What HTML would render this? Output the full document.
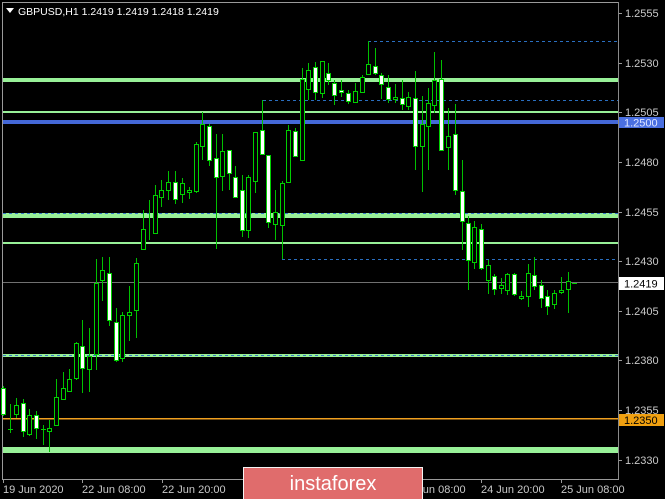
<!DOCTYPE html>
<html><head><meta charset="utf-8"><style>
html,body{margin:0;padding:0;background:#000;}
body{width:665px;height:499px;overflow:hidden;position:relative;font-family:"Liberation Sans",sans-serif;}
svg{position:absolute;left:0;top:0;}
</style></head><body>
<svg width="665" height="499" xmlns="http://www.w3.org/2000/svg" font-family="Liberation Sans, sans-serif">
<rect width="665" height="499" fill="#000"/>
<line x1="2.5" y1="2" x2="2.5" y2="480" stroke="#9a9a9a" stroke-width="1"/>
<line x1="2" y1="2.5" x2="619" y2="2.5" stroke="#9a9a9a" stroke-width="1"/>
<line x1="618.5" y1="2" x2="618.5" y2="480" stroke="#8a8a8a" stroke-width="1"/>
<line x1="2" y1="479.5" x2="619" y2="479.5" stroke="#9a9a9a" stroke-width="1"/>
<g stroke-dasharray="3,3" stroke="#2a6fc0" stroke-width="1">
<line x1="368" y1="41.5" x2="618" y2="41.5"/>
<line x1="263" y1="100.5" x2="618" y2="100.5"/>
<line x1="282" y1="259.5" x2="618" y2="259.5"/>
</g>
<rect x="3" y="78" width="615" height="4" fill="#98f098"/>
<rect x="3" y="111" width="615" height="2" fill="#98f098"/>
<rect x="3" y="120" width="615" height="4" fill="#4468d8"/>
<rect x="3" y="213" width="615" height="5" fill="#98f098"/>
<line x1="3" y1="213.5" x2="618" y2="213.5" stroke="#3a7ac8" stroke-dasharray="3,3"/>
<rect x="3" y="242" width="615" height="2" fill="#98f098"/>
<rect x="3" y="282" width="615" height="1" fill="#707070"/>
<rect x="3" y="354" width="615" height="3" fill="#98f098"/>
<line x1="3" y1="355.5" x2="618" y2="355.5" stroke="#3a7ac8" stroke-dasharray="3,3"/>
<rect x="3" y="418" width="615" height="1.5" fill="#f0a020"/>
<rect x="3" y="447" width="615" height="6" fill="#98f098"/>
<g stroke="#00c000" stroke-width="1" fill="none">
<path d="M3.5 386V416 M10.5 404V433 M16.5 398V418 M23.5 399V437 M29.5 409V436 M36.5 411V439 M43.5 425V445 M49.5 420V452 M56.5 379V426 M63.5 372V400 M69.5 369V392 M76.5 342V380 M82.5 320V393 M89.5 328V392 M96.5 259V370 M102.5 257V301 M109.5 257V326 M116.5 308V362 M122.5 312V362 M129.5 286V341 M136.5 258V338 M143.5 210V250 M149.5 200V240 M155.5 185V233 M161.5 180V207 M168.5 171V200 M175.5 171V204 M182.5 178V203 M189.5 187V199 M196.5 142V193 M202.5 112V160 M209.5 124V166 M216.5 134V249 M222.5 134V191 M229.5 150V190 M235.5 166V198 M242.5 175V237 M248.5 175V238 M255.5 133V193 M262.5 100V155 M268.5 155V228 M275.5 190V240 M282.5 181V259 M288.5 125V183 M295.5 128V157 M302.5 68V160 M308.5 63V100 M315.5 62V100 M322.5 61V98 M328.5 63V85 M334.5 80V105 M341.5 80V97 M348.5 90V104 M355.5 83V103 M362.5 75V93 M368.5 41V75 M375.5 48V75 M381.5 73V99 M388.5 75V103 M395.5 84V103 M402.5 80V110 M408.5 92V110 M415.5 71V170 M422.5 96V192 M428.5 88V170 M434.5 52V113 M441.5 60V150 M448.5 108V170 M455.5 104V195 M462.5 160V250 M468.5 216V290 M474.5 221V269 M481.5 224V270 M488.5 260V294 M494.5 274V295 M501.5 278V294 M507.5 273V295 M514.5 273V296 M521.5 291V300 M528.5 264V307 M534.5 257V290 M541.5 280V308 M547.5 290V315 M554.5 290V309 M561.5 277V294 M568.5 272V313 M574.5 283V284"/>
</g>
<g stroke="#00d000" stroke-width="1">
<g fill="#000">
<rect x="14.5" y="405.5" width="4" height="9"/>
<rect x="27.5" y="415.5" width="4" height="19"/>
<rect x="47.5" y="428.5" width="4" height="3"/>
<rect x="54.5" y="397.5" width="4" height="28"/>
<rect x="61.5" y="388.5" width="4" height="11"/>
<rect x="67.5" y="379.5" width="4" height="12"/>
<rect x="74.5" y="343.5" width="4" height="35"/>
<rect x="87.5" y="356.5" width="4" height="13"/>
<rect x="94.5" y="283.5" width="4" height="71"/>
<rect x="100.5" y="270.5" width="4" height="10"/>
<rect x="120.5" y="315.5" width="4" height="43"/>
<rect x="127.5" y="312.5" width="4" height="3"/>
<rect x="134.5" y="263.5" width="4" height="47"/>
<rect x="141.5" y="229.5" width="4" height="20"/>
<rect x="153.5" y="195.5" width="4" height="38"/>
<rect x="159.5" y="190.5" width="4" height="7"/>
<rect x="166.5" y="182.5" width="4" height="8"/>
<rect x="180.5" y="183.5" width="4" height="11"/>
<rect x="187.5" y="190.5" width="4" height="2"/>
<rect x="194.5" y="144.5" width="4" height="47"/>
<rect x="200.5" y="124.5" width="4" height="22"/>
<rect x="220.5" y="151.5" width="4" height="25"/>
<rect x="246.5" y="177.5" width="4" height="53"/>
<rect x="253.5" y="132.5" width="4" height="49"/>
<rect x="273.5" y="212.5" width="4" height="12"/>
<rect x="280.5" y="183.5" width="4" height="42"/>
<rect x="286.5" y="130.5" width="4" height="52"/>
<rect x="300.5" y="79.5" width="4" height="81"/>
<rect x="306.5" y="70.5" width="4" height="19"/>
<rect x="320.5" y="61.5" width="4" height="32"/>
<rect x="353.5" y="91.5" width="4" height="11"/>
<rect x="360.5" y="77.5" width="4" height="15"/>
<rect x="366.5" y="64.5" width="4" height="10"/>
<rect x="393.5" y="97.5" width="4" height="2"/>
<rect x="406.5" y="97.5" width="4" height="9"/>
<rect x="420.5" y="124.5" width="4" height="22"/>
<rect x="426.5" y="103.5" width="4" height="23"/>
<rect x="432.5" y="80.5" width="4" height="25"/>
<rect x="446.5" y="136.5" width="4" height="11"/>
<rect x="472.5" y="227.5" width="4" height="35"/>
<rect x="486.5" y="265.5" width="4" height="15"/>
<rect x="499.5" y="285.5" width="4" height="3"/>
<rect x="505.5" y="274.5" width="4" height="16"/>
<rect x="519.5" y="296.5" width="4" height="2"/>
<rect x="526.5" y="273.5" width="4" height="23"/>
<rect x="552.5" y="293.5" width="4" height="11"/>
<rect x="559.5" y="290.5" width="4" height="2"/>
<rect x="566.5" y="281.5" width="4" height="8"/>
</g>
<g fill="#fff">
<rect x="1.5" y="388.5" width="4" height="26"/>
<rect x="21.5" y="403.5" width="4" height="28"/>
<rect x="34.5" y="415.5" width="4" height="13"/>
<rect x="80.5" y="346.5" width="4" height="22"/>
<rect x="107.5" y="273.5" width="4" height="47"/>
<rect x="114.5" y="322.5" width="4" height="38"/>
<rect x="173.5" y="182.5" width="4" height="17"/>
<rect x="207.5" y="126.5" width="4" height="34"/>
<rect x="214.5" y="158.5" width="4" height="19"/>
<rect x="227.5" y="150.5" width="4" height="23"/>
<rect x="233.5" y="177.5" width="4" height="20"/>
<rect x="240.5" y="190.5" width="4" height="40"/>
<rect x="260.5" y="130.5" width="4" height="24"/>
<rect x="266.5" y="155.5" width="4" height="67"/>
<rect x="293.5" y="131.5" width="4" height="25"/>
<rect x="313.5" y="67.5" width="4" height="25"/>
<rect x="326.5" y="73.5" width="4" height="7"/>
<rect x="332.5" y="83.5" width="4" height="12"/>
<rect x="339.5" y="90.5" width="4" height="2"/>
<rect x="346.5" y="93.5" width="4" height="8"/>
<rect x="373.5" y="66.5" width="4" height="7"/>
<rect x="379.5" y="75.5" width="4" height="9"/>
<rect x="386.5" y="87.5" width="4" height="12"/>
<rect x="400.5" y="98.5" width="4" height="6"/>
<rect x="413.5" y="98.5" width="4" height="48"/>
<rect x="439.5" y="79.5" width="4" height="71"/>
<rect x="453.5" y="134.5" width="4" height="56"/>
<rect x="460.5" y="191.5" width="4" height="30"/>
<rect x="466.5" y="223.5" width="4" height="37"/>
<rect x="479.5" y="229.5" width="4" height="39"/>
<rect x="492.5" y="276.5" width="4" height="13"/>
<rect x="512.5" y="274.5" width="4" height="20"/>
<rect x="532.5" y="275.5" width="4" height="11"/>
<rect x="539.5" y="285.5" width="4" height="13"/>
<rect x="545.5" y="296.5" width="4" height="10"/>
</g>
<path d="M8 429.5H13 M41 429.5H46 M572 283.5H577" fill="none"/>
</g>
<path d="M6 8 L14 8 L10 13 Z" fill="#fff"/>
<text x="18" y="15" font-size="10.5" fill="#fff">GBPUSD,H1  1.2419 1.2419 1.2418 1.2419</text>
<g font-size="11" fill="#c8c8c8">
<text x="625" y="17">1.2555</text>
<text x="625" y="67">1.2530</text>
<text x="625" y="116">1.2505</text>
<text x="625" y="166">1.2480</text>
<text x="625" y="216">1.2455</text>
<text x="625" y="265">1.2430</text>
<text x="625" y="315">1.2405</text>
<text x="625" y="364">1.2380</text>
<text x="625" y="414">1.2355</text>
<text x="625" y="464">1.2330</text>
</g>
<g stroke="#9a9a9a">
<path d="M619 13.5H622 M619 63.5H622 M619 112.5H622 M619 162.5H622 M619 212.5H622 M619 261.5H622 M619 311.5H622 M619 360.5H622 M619 410.5H622 M619 460.5H622"/>
<path d="M3.5 480V483 M82.5 480V483 M162.5 480V483 M481.5 480V483 M561.5 480V483"/>
</g>
<rect x="619" y="117" width="45" height="11" fill="#4a6fe0"/>
<text x="624" y="126.5" font-size="11" fill="#dfe6ff">1.2500</text>
<rect x="619" y="277" width="45" height="13" fill="#fff"/>
<text x="624" y="287.5" font-size="11" fill="#000">1.2419</text>
<rect x="619" y="414" width="45" height="12" fill="#f0a010"/>
<text x="624" y="424" font-size="11" fill="#000">1.2350</text>
<g font-size="11" fill="#c8c8c8">
<text x="3" y="493">19 Jun 2020</text>
<text x="82" y="493">22 Jun 08:00</text>
<text x="162" y="493">22 Jun 20:00</text>
<text x="402" y="493">23 Jun 08:00</text>
<text x="481" y="493">24 Jun 20:00</text>
<text x="561" y="493">25 Jun 08:00</text>
</g>
<rect x="243.5" y="467.5" width="179" height="33" fill="#e06c6c" stroke="#f4f4f4" stroke-width="1"/>
<text x="333" y="490" font-size="20" fill="#fff" text-anchor="middle">instaforex</text>
</svg>
</body></html>
